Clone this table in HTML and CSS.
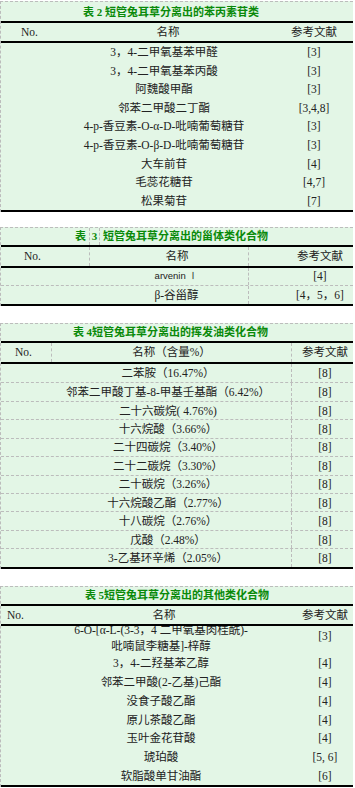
FILE: index.html
```html
<!DOCTYPE html>
<html lang="zh">
<head>
<meta charset="utf-8">
<title>短管兔耳草化学成分</title>
<link rel="stylesheet" href="styles.css">
</head>
<body>

<section class="tbl t-a">
  <div class="cap">表 2 短管兔耳草分离出的苯丙素苷类</div>
  <div class="row head"><span class="c-no">No.</span><span class="c-name">名称</span><span class="c-ref">参考文献</span></div>
  <div class="body">
    <div class="row"><span></span><span class="c-name">3，4-二甲氧基苯甲醛</span><span class="c-ref">[3]</span></div>
    <div class="row"><span></span><span class="c-name">3，4-二甲氧基苯丙酸</span><span class="c-ref">[3]</span></div>
    <div class="row"><span></span><span class="c-name">阿魏酸甲酯</span><span class="c-ref">[3]</span></div>
    <div class="row"><span></span><span class="c-name">邻苯二甲酸二丁酯</span><span class="c-ref">[3,4,8]</span></div>
    <div class="row"><span></span><span class="c-name">4-p-香豆素-O-α-D-吡喃葡萄糖苷</span><span class="c-ref">[3]</span></div>
    <div class="row"><span></span><span class="c-name">4-p-香豆素-O-β-D-吡喃葡萄糖苷</span><span class="c-ref">[3]</span></div>
    <div class="row"><span></span><span class="c-name">大车前苷</span><span class="c-ref">[4]</span></div>
    <div class="row"><span></span><span class="c-name">毛蕊花糖苷</span><span class="c-ref">[4,7]</span></div>
    <div class="row"><span></span><span class="c-name">松果菊苷</span><span class="c-ref">[7]</span></div>
  </div>
</section>

<section class="tbl t-b">
  <div class="cap split"><span class="k1">表</span><span class="k2">3</span><span class="k3">短管兔耳草分离出的甾体类化合物</span></div>
  <div class="row head"><span class="c-no">No.</span><span class="c-name">名称</span><span class="c-ref">参考文献</span></div>
  <div class="body">
    <div class="row sep"><span class="c-name"><span class="latin-sm">arvenin Ⅰ</span></span><span class="c-ref">[4]</span></div>
    <div class="row"><span class="c-name">β-谷甾醇</span><span class="c-ref">[4，5，6]</span></div>
  </div>
</section>

<section class="tbl t-c">
  <div class="cap">表 4短管兔耳草分离出的挥发油类化合物</div>
  <div class="row head"><span class="c-no">No.</span><span class="c-name">名称（含量%）</span><span class="c-ref">参考文献</span></div>
  <div class="body">
    <div class="row"><span></span><span class="c-name">二苯胺（16.47%）</span><span class="c-ref">[8]</span></div>
    <div class="row"><span></span><span class="c-name">邻苯二甲酸丁基-8-甲基壬基酯（6.42%）</span><span class="c-ref">[8]</span></div>
    <div class="row"><span></span><span class="c-name">二十六碳烷( 4.76%)</span><span class="c-ref">[8]</span></div>
    <div class="row"><span></span><span class="c-name">十六烷酸（3.66%）</span><span class="c-ref">[8]</span></div>
    <div class="row"><span></span><span class="c-name">二十四碳烷（3.40%）</span><span class="c-ref">[8]</span></div>
    <div class="row"><span></span><span class="c-name">二十二碳烷（3.30%）</span><span class="c-ref">[8]</span></div>
    <div class="row"><span></span><span class="c-name">二十碳烷（3.26%）</span><span class="c-ref">[8]</span></div>
    <div class="row"><span></span><span class="c-name">十六烷酸乙酯（2.77%）</span><span class="c-ref">[8]</span></div>
    <div class="row"><span></span><span class="c-name">十八碳烷（2.76%）</span><span class="c-ref">[8]</span></div>
    <div class="row"><span></span><span class="c-name">戊酸（2.48%）</span><span class="c-ref">[8]</span></div>
    <div class="row"><span></span><span class="c-name">3-乙基环辛烯（2.05%）</span><span class="c-ref">[8]</span></div>
  </div>
</section>

<section class="tbl t-d">
  <div class="cap">表 5短管兔耳草分离出的其他类化合物</div>
  <div class="row head"><span class="c-no">No.</span><span class="c-name">名称</span><span class="c-ref">参考文献</span></div>
  <div class="body">
    <div class="row two"><span></span><span class="c-name">6-O-[α-L-(3-3，4 二甲氧基肉桂酰)-<br>吡喃鼠李糖基]-梓醇</span><span class="c-ref">[3]</span></div>
    <div class="row"><span></span><span class="c-name">3，4-二羟基苯乙醇</span><span class="c-ref">[4]</span></div>
    <div class="row"><span></span><span class="c-name">邻苯二甲酸(2-乙基)己酯</span><span class="c-ref">[4]</span></div>
    <div class="row"><span></span><span class="c-name">没食子酸乙酯</span><span class="c-ref">[4]</span></div>
    <div class="row"><span></span><span class="c-name">原儿茶酸乙酯</span><span class="c-ref">[4]</span></div>
    <div class="row"><span></span><span class="c-name">玉叶金花苷酸</span><span class="c-ref">[4]</span></div>
    <div class="row"><span></span><span class="c-name">琥珀酸</span><span class="c-ref">[5, 6]</span></div>
    <div class="row"><span></span><span class="c-name">软脂酸单甘油酯</span><span class="c-ref">[6]</span></div>
  </div>
</section>

</body>
</html>
```

FILE: styles.css
```css
* { box-sizing: border-box; margin: 0; padding: 0; }

body {
  margin: 0;
  padding-top: 1px;
  background: #ffffff;
  font-family: "Liberation Serif", "Noto Sans CJK SC", serif;
  font-size: 11.5px;
  color: #222222;
  line-height: 16px;
}

.tbl {
  width: 353px;
  background: #e3f6e6;
  border-top: 1px dashed #bcbcbc;
  border-left: 1px dashed #bcbcbc;
}

.cap {
  height: 19px;
  display: flex;
  align-items: center;
  justify-content: center;
  color: #0a8a0a;
  font-size: 11px;
  font-weight: bold;
  border-bottom: 2px solid #000;
}

.row {
  display: grid;
  align-items: center;
}

.head {
  border-bottom: 2px solid #000;
}

.body {
  border-bottom: 2px solid #000;
}

.c-name { text-align: center; white-space: nowrap; }
.c-ref { text-align: center; white-space: nowrap; }
.c-no { text-align: left; }

/* ---------- table 2 ---------- */
.t-a .cap { height: 21px; padding-right: 12px; }
.t-a .row { grid-template-columns: 55px 216px 1fr; }
.t-a .head { height: 20px; }
.t-a .head .c-no { padding-left: 20px; }
.t-a .head .c-name { padding-left: 8px; }
.t-a .c-ref { padding-left: 3px; }
.t-a .body .row { height: 18.56px; }

/* ---------- table 3 ---------- */
.t-b { margin-top: 15px; }
.t-b .split {
  display: grid;
  grid-template-columns: 88px 10px 1fr;
  align-items: stretch;
}
.t-b .split span { display: flex; align-items: center; }
.t-b .k1 { justify-content: flex-end; padding-right: 3px; }
.t-b .k2 { justify-content: center; border-left: 1px dashed #bcbcbc; }
.t-b .k3 { padding-left: 3px; border-left: 1px dashed #bcbcbc; }
.t-b .head {
  height: 21px;
  grid-template-columns: 88px 159px 1fr;
  align-items: stretch;
}
.t-b .head span { display: flex; align-items: center; }
.t-b .head .c-no { padding-left: 23px; }
.t-b .head .c-name { justify-content: center; padding-left: 16px; border-left: 1px dashed #bcbcbc; }
.t-b .c-ref { justify-content: center; padding-left: 38px; border-left: 1px dashed #bcbcbc; }
.t-b .body .row {
  height: 18px;
  grid-template-columns: 247px 1fr;
  align-items: stretch;
}
.t-b .body .row span { display: flex; align-items: center; }
.t-b .body .c-name { justify-content: center; padding-left: 104px; }
.t-b .sep { border-bottom: 1px dashed #bcbcbc; }
.latin-sm { font-family: "Liberation Sans", sans-serif; font-size: 9.5px; }

/* ---------- table 4 ---------- */
.t-c { margin-top: 17px; }
.t-c .cap { padding-right: 13px; }
.t-c .row {
  grid-template-columns: 50px 240px 1fr;
  align-items: stretch;
}
.t-c .row span { display: flex; align-items: center; justify-content: center; }
.t-c .head { height: 21px; }
.t-c .head .c-no { justify-content: flex-start; padding-left: 14px; }
.t-c .head .c-name { border-left: 1px dashed #bcbcbc; }
.t-c .c-ref { padding-left: 5px; border-left: 1px dashed #bcbcbc; }
.t-c .body .row { height: 18.45px; }
.t-c .body .c-name { padding-right: 6px; }
.t-c .body .row + .row { border-top: 1px dashed #bcbcbc; }

/* ---------- table 5 ---------- */
.t-d { margin-top: 17px; }
.t-d .row { grid-template-columns: 40px 256px 1fr; }
.t-d .head { height: 20px; }
.t-d .head .c-no { padding-left: 6px; }
.t-d .head .c-name { padding-right: 10px; }
.t-d .body .c-name { padding-right: 16px; }
.t-d .body .row { height: 18.8px; }
.t-d .body .row.two {
  height: 28px;
  overflow: hidden;
  align-items: start;
}
.t-d .two .c-name { margin-top: -4px; line-height: 16px; }
.t-d .two .c-ref { align-self: center; padding-bottom: 7px; }
```
